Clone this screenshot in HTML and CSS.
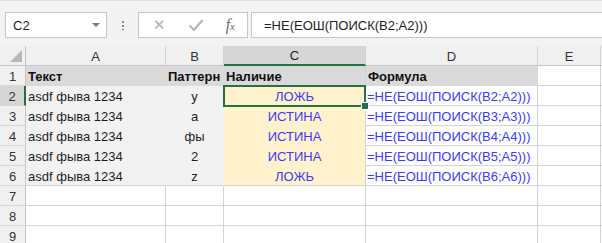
FILE: index.html
```html
<!DOCTYPE html>
<html lang="ru">
<head>
  <meta charset="UTF-8" />
  <title>Лист Excel</title>
  <link rel="stylesheet" href="styles.css">
</head>
<body>
  <div class="toolbar">
    <div class="namebox">
      <span>C2</span>
      <span class="drop"></span>
    </div>
    <div class="grip"></div>
    <div class="fxbox">
      <span class="btn cancel">&#x2715;</span>
      <svg class="btn check" width="16" height="14" viewBox="0 0 16 14">
        <path d="M1.5 7.5 L6 12 L14.5 2" fill="none" stroke="#b4b4b4" stroke-width="2" />
      </svg>
      <span class="btn fx">f<small>x</small></span>
    </div>
    <div class="formula">=НЕ(ЕОШ(ПОИСК(B2;A2)))</div>
  </div>

  <div class="sheet">
    <div class="corner"><span class="tri"></span></div>
    <div class="colhead">A</div>
    <div class="colhead">B</div>
    <div class="colhead sel">C</div>
    <div class="colhead">D</div>
    <div class="colhead">E</div>
    <div class="colhead last"></div>

    <div class="rowhead">1</div>
    <div class="cell title">Текст</div>
    <div class="cell title">Паттерн</div>
    <div class="cell title">Наличие</div>
    <div class="cell title">Формула</div>
    <div class="cell"></div>
    <div class="cell last"></div>

    <div class="rowhead sel">2</div>
    <div class="cell grey">asdf фыва 1234</div>
    <div class="cell grey mid">y</div>
    <div class="cell cream mid">ЛОЖЬ</div>
    <div class="cell blue">=НЕ(ЕОШ(ПОИСК(B2;A2)))</div>
    <div class="cell"></div>
    <div class="cell last"></div>

    <div class="rowhead">3</div>
    <div class="cell grey">asdf фыва 1234</div>
    <div class="cell grey mid">a</div>
    <div class="cell cream mid">ИСТИНА</div>
    <div class="cell blue">=НЕ(ЕОШ(ПОИСК(B3;A3)))</div>
    <div class="cell"></div>
    <div class="cell last"></div>

    <div class="rowhead">4</div>
    <div class="cell grey">asdf фыва 1234</div>
    <div class="cell grey mid">фы</div>
    <div class="cell cream mid">ИСТИНА</div>
    <div class="cell blue">=НЕ(ЕОШ(ПОИСК(B4;A4)))</div>
    <div class="cell"></div>
    <div class="cell last"></div>

    <div class="rowhead">5</div>
    <div class="cell grey">asdf фыва 1234</div>
    <div class="cell grey mid">2</div>
    <div class="cell cream mid">ИСТИНА</div>
    <div class="cell blue">=НЕ(ЕОШ(ПОИСК(B5;A5)))</div>
    <div class="cell"></div>
    <div class="cell last"></div>

    <div class="rowhead">6</div>
    <div class="cell grey end">asdf фыва 1234</div>
    <div class="cell grey mid end">z</div>
    <div class="cell cream mid end">ЛОЖЬ</div>
    <div class="cell blue">=НЕ(ЕОШ(ПОИСК(B6;A6)))</div>
    <div class="cell"></div>
    <div class="cell last"></div>

    <div class="rowhead">7</div>
    <div class="cell"></div>
    <div class="cell"></div>
    <div class="cell"></div>
    <div class="cell"></div>
    <div class="cell"></div>
    <div class="cell last"></div>

    <div class="rowhead">8</div>
    <div class="cell"></div>
    <div class="cell"></div>
    <div class="cell"></div>
    <div class="cell"></div>
    <div class="cell"></div>
    <div class="cell last"></div>

    <div class="rowhead">9</div>
    <div class="cell"></div>
    <div class="cell"></div>
    <div class="cell"></div>
    <div class="cell"></div>
    <div class="cell"></div>
    <div class="cell last"></div>

    <!-- рамка активной ячейки C2 -->
    <div class="selection"><span class="handle"></span></div>
  </div>
</body>
</html>
```

FILE: styles.css
```css
body {
  margin: 0;
  background: #f3f3f3;
  font-family: "Liberation Sans", Arial, sans-serif;
  font-size: 13px;
  color: #1e1e1e;
  overflow: hidden;
}

/* Строка формул */
.toolbar {
  height: 46px;
  box-sizing: border-box;
  padding-top: 11px;
  border-top: 1px solid #e2e2e2;
  display: flex;
  align-items: flex-start;
}

.namebox,
.fxbox,
.formula {
  height: 26px;
  box-sizing: border-box;
  background: #fff;
  border: 1px solid #c6c6c6;
  display: flex;
  align-items: center;
}

.namebox {
  width: 102px;
  margin-left: 5px;
  padding: 0 6px 0 7px;
  justify-content: space-between;
}

.drop {
  width: 0;
  height: 0;
  border-left: 4px solid transparent;
  border-right: 4px solid transparent;
  border-top: 4px solid #777;
}

.grip {
  width: 2px;
  height: 10px;
  margin: 8px 14px 0 15px;
  background: radial-gradient(circle, #8a8a8a 0.8px, transparent 1px) 0 0 / 2px 4px;
}

.fxbox {
  width: 110px;
  padding: 0 12px 0 14px;
  justify-content: space-between;
}

.btn {
  color: #b0b0b0;
}

.cancel {
  font-size: 15px;
}

.fx {
  color: #6a6a6a;
  font-family: "Liberation Serif", serif;
  font-style: italic;
  font-size: 16px;
}

.fx small {
  font-size: 11px;
}

.formula {
  flex: 1;
  margin-left: 3px;
  padding-left: 12px;
  border-right: none;
  color: #1e1e1e;
}

/* Лист */
.sheet {
  position: relative;
  display: grid;
  grid-template-columns: 26px 140px 58px 142px 172px 63px 1fr;
  grid-auto-rows: 20px;
  background: #fff;
}

.corner,
.colhead,
.rowhead {
  background: #f0f0f0;
  color: #333;
  box-sizing: border-box;
  display: flex;
  align-items: center;
  justify-content: center;
}

.corner {
  position: relative;
  border-right: 1px solid #c6c6c6;
  border-bottom: 1px solid #c6c6c6;
}

.tri {
  position: absolute;
  right: 3px;
  bottom: 3px;
  width: 0;
  height: 0;
  border-left: 12px solid transparent;
  border-bottom: 12px solid #b8b8b8;
}

.colhead {
  border-right: 1px solid #d2d2d2;
  border-bottom: 1px solid #c6c6c6;
  padding-top: 1px;
}

.colhead.sel {
  background: #d6d6d6;
  border-bottom: 2px solid #217346;
  color: #1e1e1e;
}

.rowhead {
  border-right: 1px solid #c6c6c6;
  border-bottom: 1px solid #d8d8d8;
  padding-top: 1px;
}

.rowhead.sel {
  background: #d6d6d6;
  border-right: 2px solid #217346;
}

.cell {
  box-sizing: border-box;
  border-right: 1px solid #d4d4d4;
  border-bottom: 1px solid #d4d4d4;
  padding: 2px 2px 0;
  line-height: 18px;
  white-space: nowrap;
  overflow: hidden;
}

.cell.last {
  border-right: none;
}

.title {
  background: #dadada;
  border-color: #dadada;
  font-weight: bold;
  color: #111;
}

.title:nth-child(11) {
  border-right-color: #d4d4d4;
}

.grey {
  background: #f2f2f2;
  border-color: #f2f2f2;
}

.cream {
  background: #fff2cc;
  border-bottom-color: #fff2cc;
  border-right-color: #d4d4d4;
  color: #3a3aff;
}

.grey.end,
.cream.end {
  border-bottom-color: #d4d4d4;
}

.mid {
  text-align: center;
}

.blue {
  color: #3a3aff;
  padding-left: 1px;
}

.selection {
  position: absolute;
  left: 223px;
  top: 39px;
  width: 143px;
  height: 22px;
  box-sizing: border-box;
  border: 2px solid #217346;
}

.handle {
  position: absolute;
  right: -5px;
  bottom: -5px;
  width: 6px;
  height: 6px;
  background: #217346;
  border: 1px solid #fff;
}
```
